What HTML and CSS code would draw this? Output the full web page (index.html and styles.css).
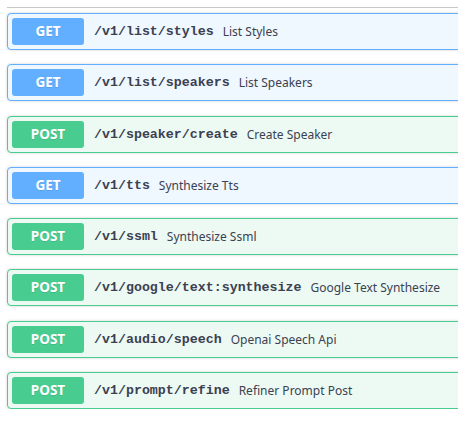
FILE: index.html
```html
<!DOCTYPE html>
<html>
<head>
<meta charset="utf-8">
<link rel="stylesheet" href="styles.css">
</head>
<body>
<div class="section">
  <div class="tag-line"></div>
  <div class="ops">
    <div class="opblock get"><span class="method">GET</span><span class="path">/v1/list/styles</span><span class="summary">List Styles</span></div>
    <div class="opblock get"><span class="method">GET</span><span class="path">/v1/list/speakers</span><span class="summary">List Speakers</span></div>
    <div class="opblock post"><span class="method">POST</span><span class="path">/v1/speaker/create</span><span class="summary">Create Speaker</span></div>
    <div class="opblock get"><span class="method">GET</span><span class="path">/v1/tts</span><span class="summary">Synthesize Tts</span></div>
    <div class="opblock post"><span class="method">POST</span><span class="path">/v1/ssml</span><span class="summary">Synthesize Ssml</span></div>
    <div class="opblock post"><span class="method">POST</span><span class="path">/v1/google/text:synthesize</span><span class="summary">Google Text Synthesize</span></div>
    <div class="opblock post"><span class="method">POST</span><span class="path">/v1/audio/speech</span><span class="summary">Openai Speech Api</span></div>
    <div class="opblock post"><span class="method">POST</span><span class="path">/v1/prompt/refine</span><span class="summary">Refiner Prompt Post</span></div>
  </div>
</div>
</body>
</html>
```
FILE: styles.css
```css
html, body {
  margin: 0;
  padding: 0;
  background: #fff;
  overflow: hidden;
}
.section {
  padding: 7px 0 0 7px;
  width: 460px;
}
.tag-line {
  height: 1px;
  background: #c8c8c8;
  margin-bottom: 5px;
}
.ops {
  display: flex;
  flex-direction: column;
  gap: 14.3px;
}
.opblock {
  display: flex;
  align-items: center;
  height: 27px;
  padding: 4px;
  border: 1px solid;
  border-radius: 4px;
  box-shadow: 0 0 3px rgba(0,0,0,.19);
}
.opblock.get {
  background: #eff7ff;
  border-color: #61affe;
}
.opblock.post {
  background: #edfaf4;
  border-color: #49cc90;
}
.method {
  width: 72px;
  height: 27px;
  line-height: 27px;
  text-align: center;
  border-radius: 3px;
  color: #fff;
  font-family: "Noto Sans", sans-serif;
  font-weight: 700;
  font-size: 13.5px;
  text-shadow: 0 1px 0 rgba(0,0,0,.1);
  flex: none;
}
.get .method { background: #61affe; }
.post .method { background: #49cc90; }
.path {
  margin-left: 10px;
  font-family: "Liberation Mono", monospace;
  font-weight: 700;
  font-size: 13.3px;
  color: #3b4151;
}
.summary {
  margin-left: 9px;
  font-family: "Noto Sans", sans-serif;
  font-size: 12px;
  color: #3b4151;
}
```
